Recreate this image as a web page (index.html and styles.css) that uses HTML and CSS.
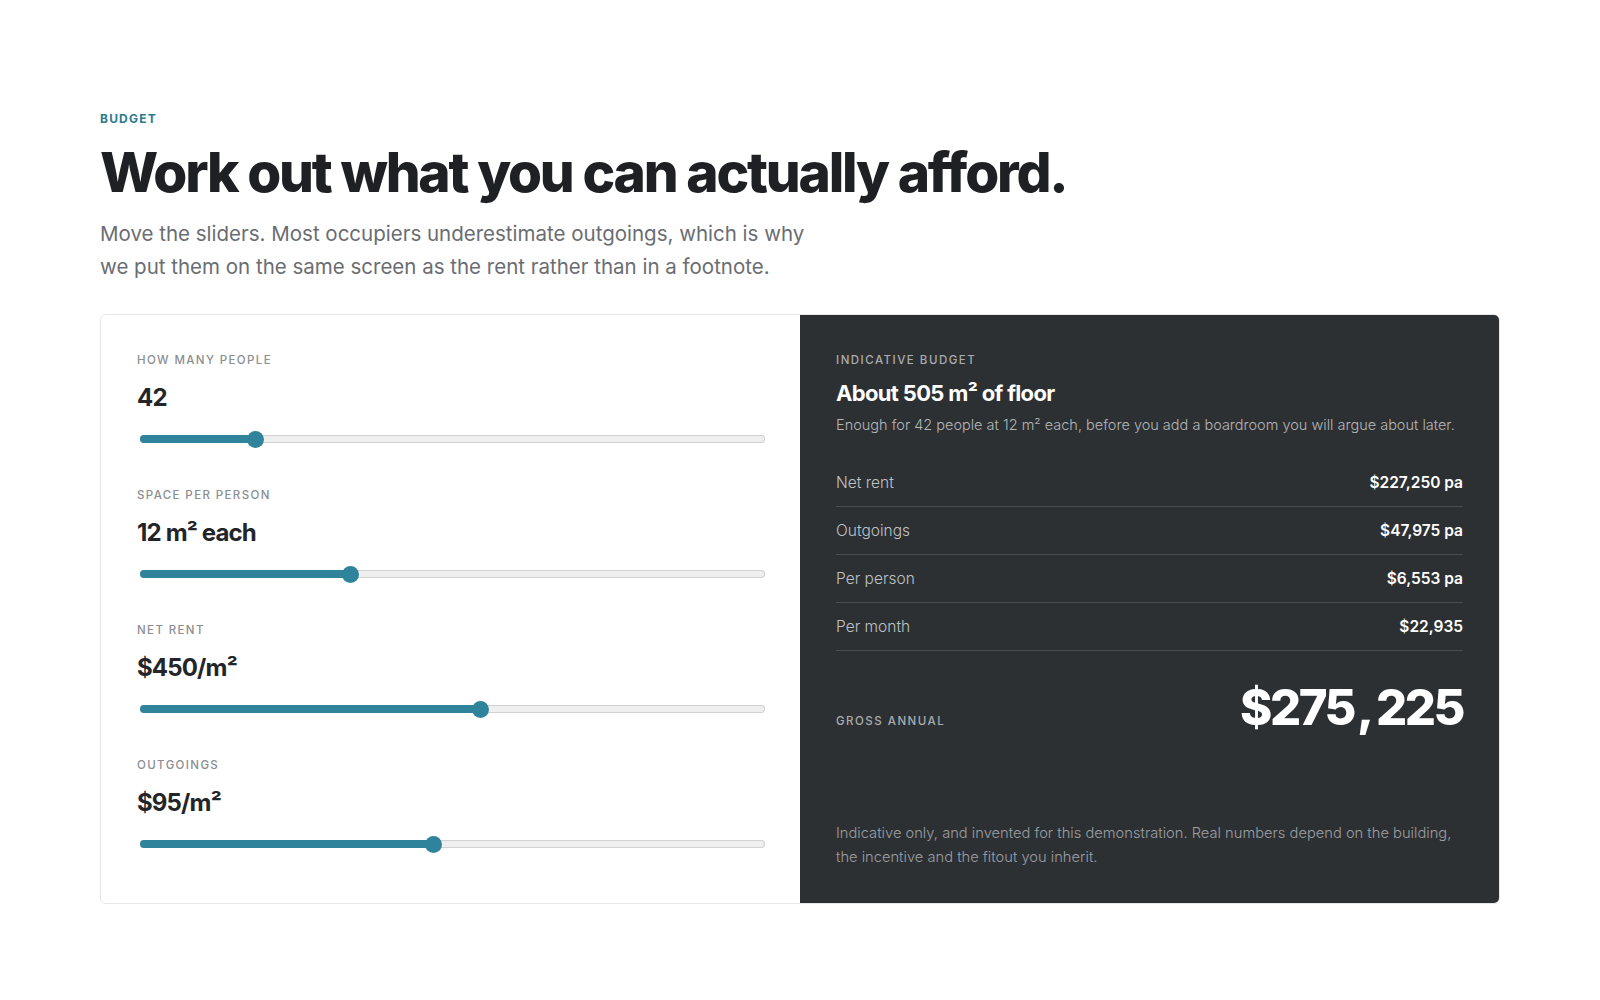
FILE: index.html
```html
<!DOCTYPE html>
<html lang="en">
<head>
<meta charset="utf-8">
<title>Budget</title>
<link rel="stylesheet" href="styles.css">
</head>
<body>
<main class="section">
  <p class="eyebrow">BUDGET</p>
  <h1 class="title">Work out what you can actually afford.</h1>
  <p class="lede">Move the sliders. Most occupiers underestimate outgoings, which is why we put them on the same screen as the rent rather than in a footnote.</p>

  <div class="card">
    <div class="inputs">
      <div class="field">
        <div class="field-label">HOW MANY PEOPLE</div>
        <div class="field-value">42</div>
        <div class="slider"><div class="track"><div class="fill" style="width:18.6%"><span class="thumb"></span></div></div></div>
      </div>
      <div class="field">
        <div class="field-label">SPACE PER PERSON</div>
        <div class="field-value">12 m² each</div>
        <div class="slider"><div class="track"><div class="fill" style="width:33.8%"><span class="thumb"></span></div></div></div>
      </div>
      <div class="field">
        <div class="field-label">NET RENT</div>
        <div class="field-value">$450/m²</div>
        <div class="slider"><div class="track"><div class="fill" style="width:54.5%"><span class="thumb"></span></div></div></div>
      </div>
      <div class="field">
        <div class="field-label">OUTGOINGS</div>
        <div class="field-value">$95/m²</div>
        <div class="slider"><div class="track"><div class="fill" style="width:47%"><span class="thumb"></span></div></div></div>
      </div>
    </div>

    <div class="result">
      <div class="result-label">INDICATIVE BUDGET</div>
      <div class="result-title">About 505 m² of floor</div>
      <p class="result-sub">Enough for 42 people at 12 m² each, before you add a boardroom you will argue about later.</p>

      <div class="rows">
        <div class="row"><span class="row-name">Net rent</span><span class="row-val">$227,250 pa</span></div>
        <div class="row"><span class="row-name">Outgoings</span><span class="row-val">$47,975 pa</span></div>
        <div class="row"><span class="row-name">Per person</span><span class="row-val">$6,553 pa</span></div>
        <div class="row"><span class="row-name">Per month</span><span class="row-val">$22,935</span></div>
      </div>

      <div class="gross">
        <span class="gross-label">GROSS ANNUAL</span>
        <span class="gross-val">$275<span class="comma">,</span>225</span>
      </div>

      <p class="note">Indicative only, and invented for this demonstration. Real numbers depend on the building, the incentive and the fitout you inherit.</p>
    </div>
  </div>
</main>
</body>
</html>
```

FILE: styles.css
```css
* { box-sizing: border-box; }

body {
  margin: 0;
  background: #ffffff;
  font-family: Inter, "Noto Sans", sans-serif;
  color: #1f2124;
}

.section {
  padding: 112px 0 0 100px;
  width: 1500px;
}

.eyebrow {
  margin: 0;
  font-size: 12px;
  line-height: 14px;
  font-weight: 700;
  letter-spacing: 0.1em;
  color: #2b7a8f;
}

.title {
  margin: 15px 0 0;
  font-size: 55px;
  line-height: 62px;
  font-weight: 800;
  letter-spacing: -0.04em;
  color: #1e2023;
}

.lede {
  margin: 15px 0 0;
  max-width: 730px;
  font-size: 20.5px;
  line-height: 32.5px;
  font-weight: 400;
  letter-spacing: 0;
  color: #6a6d72;
}

.card {
  margin-top: 31px;
  display: grid;
  grid-template-columns: 1fr 1fr;
  border: 1px solid #e6e6e6;
  border-radius: 6px;
  overflow: hidden;
}

.inputs {
  padding: 38px 35px 49px 36px;
  background: #ffffff;
  display: flex;
  flex-direction: column;
  gap: 39px;
}

.field-label {
  font-size: 11.5px;
  line-height: 14px;
  font-weight: 500;
  letter-spacing: 0.12em;
  color: #8b8e92;
}

.field-value {
  margin-top: 16px;
  font-size: 24px;
  line-height: 30px;
  font-weight: 700;
  letter-spacing: -0.035em;
  color: #232529;
}

.slider {
  margin-top: 16px;
  height: 20px;
  display: flex;
  align-items: center;
  padding: 0 0 0 3px;
}

.track {
  position: relative;
  width: 100%;
  height: 8px;
  border-radius: 4px;
  background: #efefef;
  box-shadow: inset 0 0 0 1px #d2d2d2;
}

.fill {
  position: relative;
  height: 100%;
  border-radius: 4px;
  background: #2f839b;
}

.thumb {
  position: absolute;
  right: -8px;
  top: -4.5px;
  width: 17px;
  height: 17px;
  border-radius: 50%;
  background: #2f839b;
}

.result {
  background: #2d3033;
  padding: 38px 36px 34px 36px;
  display: flex;
  flex-direction: column;
  color: #ffffff;
}

.result-label {
  font-size: 11.5px;
  line-height: 14px;
  font-weight: 500;
  letter-spacing: 0.13em;
  color: #a9acb0;
}

.result-title {
  margin-top: 12px;
  font-size: 22px;
  line-height: 28px;
  font-weight: 700;
  letter-spacing: -0.03em;
  color: #ffffff;
}

.result-sub {
  margin: 7.5px 0 0;
  font-size: 14.5px;
  line-height: 20px;
  font-weight: 300;
  letter-spacing: 0;
  color: #b4b7ba;
}

.rows {
  margin-top: 24px;
}

.row {
  display: flex;
  justify-content: space-between;
  align-items: baseline;
  padding: 14px 0 13px;
  border-bottom: 1px solid #4a4d51;
  font-size: 15.5px;
  line-height: 20px;
}

.row-name {
  font-weight: 300;
  color: #bfc2c5;
}

.row-val {
  font-weight: 600;
  color: #ffffff;
}

.gross {
  margin-top: 29px;
  display: flex;
  justify-content: space-between;
  align-items: baseline;
}

.gross-label {
  font-size: 11.5px;
  line-height: 14px;
  font-weight: 500;
  letter-spacing: 0.13em;
  color: #a9acb0;
}

.gross-val {
  font-size: 49px;
  line-height: 56px;
  font-weight: 800;
  letter-spacing: -0.05em;
  color: #ffffff;
}

.comma {
  margin: 0 4px 0 3px;
}

.note {
  margin: auto 0 0;
  font-size: 14.7px;
  line-height: 23.4px;
  font-weight: 300;
  letter-spacing: 0;
  color: #9c9fa3;
}
```
